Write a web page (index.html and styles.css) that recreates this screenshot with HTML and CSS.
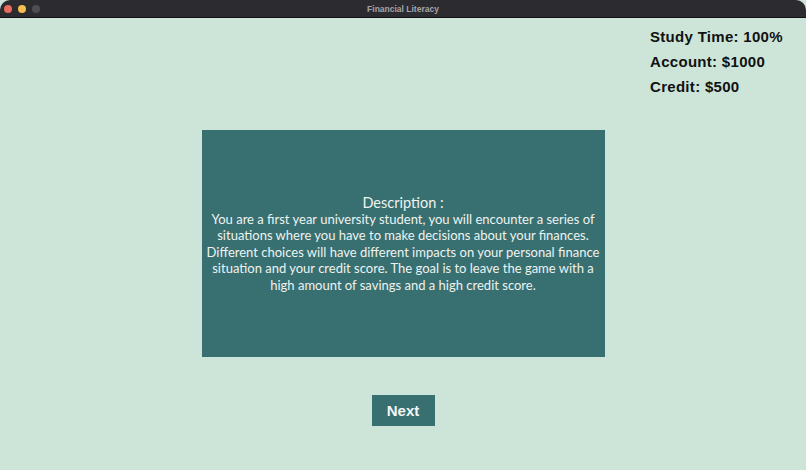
FILE: index.html
```html
<!DOCTYPE html>
<html lang="en">
<head>
  <meta charset="UTF-8">
  <title>Financial Literacy</title>
  <link rel="stylesheet" href="styles.css">
</head>
<body>
  <div class="window">
    <div class="titlebar">
      <div class="lights">
        <span class="light red"></span>
        <span class="light yellow"></span>
        <span class="light gray"></span>
      </div>
      <div class="title">Financial Literacy</div>
    </div>
    <div class="content">
      <div class="stats">
        <div>Study Time: 100%</div>
        <div>Account: $1000</div>
        <div>Credit: $500</div>
      </div>
      <div class="card">
        <div class="card-title">Description :</div>
        <p>You are a first year university student, you will encounter a series of<br>
        situations where you have to make decisions about your finances.<br>
        Different choices will have different impacts on your personal finance<br>
        situation and your credit score. The goal is to leave the game with a<br>
        high amount of savings and a high credit score.</p>
      </div>
      <button class="next">Next</button>
    </div>
  </div>
</body>
</html>
```

FILE: styles.css
```css
html, body {
  margin: 0;
  padding: 0;
  background: #cce5d8;
}
.window {
  width: 806px;
  height: 470px;
  display: flex;
  flex-direction: column;
  background: #cce5d8;
  border-radius: 10px 10px 0 0;
  overflow: hidden;
}
.titlebar {
  height: 17px;
  background: #2c2b2f;
  border-bottom: 1px solid #111;
  display: flex;
  align-items: center;
  position: relative;
}
.lights {
  display: flex;
  gap: 6px;
  padding-left: 4px;
}
.light {
  width: 8px;
  height: 8px;
  border-radius: 50%;
}
.red { background: #ec6a5e; }
.yellow { background: #f4bf4f; }
.gray { background: #4e4d52; }
.title {
  position: absolute;
  left: 0;
  right: 0;
  text-align: center;
  font-family: "Liberation Sans", Arial, sans-serif;
  font-weight: bold;
  font-size: 8.5px;
  color: #a5a4a8;
}
.content {
  flex: 1;
  position: relative;
  display: flex;
  flex-direction: column;
  align-items: center;
  padding-top: 112px;
}
.stats {
  position: absolute;
  top: 6px;
  left: 650px;
  font-family: "Liberation Sans", Arial, sans-serif;
  font-weight: bold;
  font-size: 15px;
  line-height: 25px;
  color: #111;
  letter-spacing: 0.3px;
}
.card {
  width: 403px;
  height: 227px;
  background: #386f70;
  color: #eef3f1;
  font-family: Lato, sans-serif;
  text-align: center;
  display: flex;
  flex-direction: column;
  justify-content: center;
  box-sizing: border-box;
  padding: 0 2px;
  white-space: nowrap;
}
.card-title {
  font-size: 14.5px;
  line-height: 17px;
}
.card p {
  margin: 0;
  font-size: 13px;
  line-height: 16.5px;
}
.next {
  margin-top: 38px;
  width: 63px;
  height: 31px;
  border: none;
  background: #386f70;
  color: #f2f6f4;
  font-family: "Liberation Sans", Arial, sans-serif;
  font-weight: bold;
  font-size: 15px;
  padding: 0;
}
```
